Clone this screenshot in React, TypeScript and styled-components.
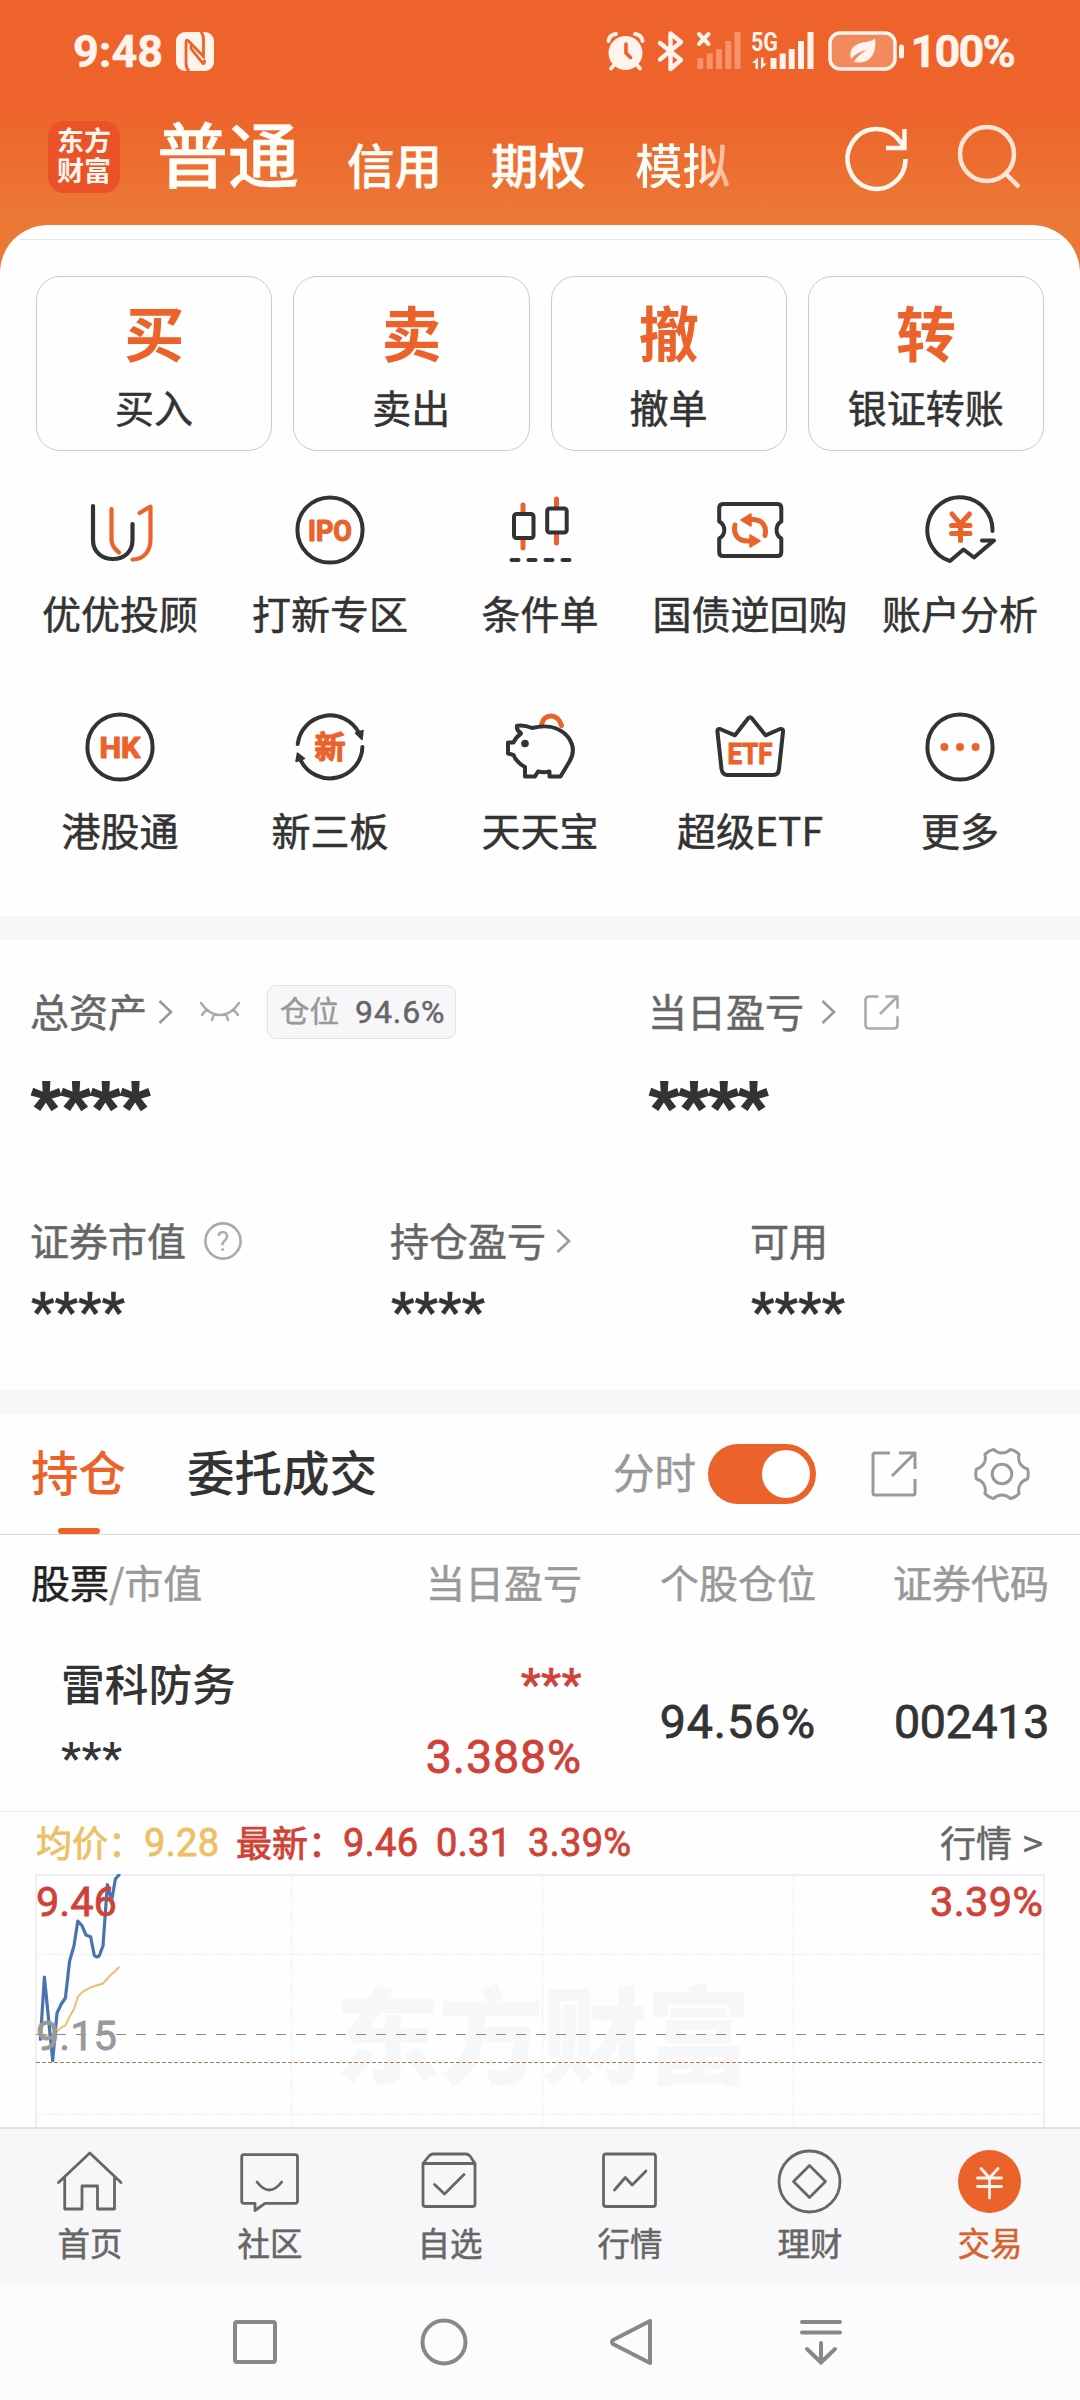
import React from "react";
import styled, { createGlobalStyle } from "styled-components";

const CJK = `"Noto Sans CJK SC", sans-serif`;
const NUM = `Roboto, "Noto Sans CJK SC", sans-serif`;
const ORANGE = "#eb632b";
const INK = "#333333";
const RED = "#cf4237";

const Global = createGlobalStyle`
  * { box-sizing: border-box; }
  body { margin: 0; background: #fefefe; }
`;

const Screen = styled.div`
  width: 1080px;
  height: 2400px;
  overflow: hidden;
  display: flex;
  flex-direction: column;
  background: #fefefe;
  font-family: ${CJK};
  color: ${INK};
  line-height: 1;
  white-space: nowrap;
  -webkit-text-stroke: 0.5px currentColor;
  svg { display: block; flex: none; overflow: visible; }
`;

/* ---------- top ---------- */

const Top = styled.header`
  height: 290px;
  flex: none;
  background: linear-gradient(#ee632b 0, #ed632b 108px, #ec7836 215px);
`;

const StatusBar = styled.div`
  height: 102px;
  padding: 0 66px 0 73px;
  display: flex;
  align-items: center;
  color: #fff3ec;
`;

const StatusText = styled.span<{ $ml?: number; $ls?: number }>`
  font: 700 45px/1 ${NUM};
  margin-left: ${(p) => p.$ml ?? 0}px;
  letter-spacing: ${(p) => p.$ls ?? 0}px;
`;

const StatusRight = styled.div`
  margin-left: auto;
  display: flex;
  align-items: center;
`;

const TitleBar = styled.div`
  height: 123px;
  padding: 0 58px 0 48px;
  display: flex;
  align-items: flex-start;
`;

const Logo = styled.div`
  width: 72px;
  height: 72px;
  margin-top: 19px;
  padding: 4px 9px 0;
  border-radius: 16px;
  background: #ec5228;
  color: #fff6ee;
  font-size: 27px;
  font-weight: 700;
  line-height: 30px;
  white-space: normal;
  word-break: break-all;
  -webkit-text-stroke: 0;
`;

const Markets = styled.nav`
  margin-left: 37px;
  padding-top: 14px;
  width: 600px;
  display: flex;
  align-items: baseline;
  color: #fffdf8;
  font-weight: 500;
`;

const Market = styled.span<{ $active?: boolean; $fade?: boolean }>`
  font-size: ${(p) => (p.$active ? 71 : 47.5)}px;
  margin-right: ${(p) => (p.$active ? 48 : 49)}px;
  position: relative;
  top: ${(p) => (p.$active ? 0 : 2)}px;
  ${(p) => p.$fade && `
    color: transparent;
    -webkit-text-stroke: 0;
    background: linear-gradient(90deg, #fffdf8 62%, rgba(255, 240, 225, 0.5) 100%);
    background-clip: text;
    -webkit-background-clip: text;
  `}
`;

const TitleActions = styled.div`
  margin-left: auto;
  margin-top: 16px;
  display: flex;
  gap: 47px;
`;

/* ---------- trading panel ---------- */

const Panel = styled.main`
  margin-top: -65px;
  height: 691px;
  flex: none;
  padding-top: 14px;
  border-radius: 48px 48px 0 0;
  background: #fefefe;
`;

const PanelLine = styled.div`
  height: 1px;
  margin: 0 20px;
  background: #e6e6e6;
`;

const Actions = styled.div`
  display: grid;
  grid-template-columns: repeat(4, 1fr);
  gap: 21px;
  padding: 36px 36px 0;
`;

const ActionCard = styled.button`
  height: 175px;
  padding: 25px 0 0;
  border: 1px solid #cbcbcb;
  border-radius: 24px;
  background: none;
  display: flex;
  flex-direction: column;
  align-items: center;
  gap: 27.5px;
  color: ${INK};
  font: 400 39px/1 ${CJK};
  -webkit-text-stroke: 0.5px currentColor;
`;

const ActionGlyph = styled.span`
  font-size: 60px;
  font-weight: 700;
  line-height: 57px;
  color: ${ORANGE};
  -webkit-text-stroke: 0;
`;

const Services = styled.div`
  display: grid;
  grid-template-columns: repeat(5, 210px);
  justify-content: center;
  row-gap: 79px;
  padding-top: 43px;
`;

const Service = styled.div`
  display: flex;
  flex-direction: column;
  align-items: center;
  gap: 27px;
  font-size: 39px;
`;

const Band = styled.div`
  height: 24px;
  flex: none;
  background: #f7f7fa;
`;

/* ---------- assets ---------- */

const Assets = styled.section`
  height: 450px;
  flex: none;
  padding: 45px 0 0 30px;
  color: #666;
`;

const AssetGrid = styled.div<{ $cols: string; $mt?: number }>`
  display: grid;
  grid-template-columns: ${(p) => p.$cols};
  margin-top: ${(p) => p.$mt ?? 0}px;
`;

const AssetLabel = styled.div`
  height: 54px;
  display: flex;
  align-items: center;
  font-size: 39px;
`;

const LabelText = styled.span`
  position: relative;
  top: -2px;
`;

const Gap = styled.i<{ $w: number }>`
  width: ${(p) => p.$w}px;
  flex: none;
`;

const Badge = styled.span`
  width: 189px;
  height: 54px;
  margin-left: 27px;
  padding-left: 12px;
  border: 1px solid #e2e2e4;
  border-radius: 9px;
  background: #f7f7fa;
  display: flex;
  align-items: center;
  gap: 16px;
  font-size: 29.5px;
  color: #999;
`;

const BadgeValue = styled.span`
  font: 400 32px/1 ${NUM};
  letter-spacing: 0.9px;
  color: #666;
`;

const Stars = styled.div<{ $size: number; $bold?: boolean; $mt: number }>`
  font: ${(p) => (p.$bold ? 700 : 500)} ${(p) => p.$size}px/1 ${NUM};
  height: 30px;
  margin-top: ${(p) => p.$mt}px;
  padding-left: 1px;
  color: ${INK};
  -webkit-text-stroke: ${(p) => (p.$bold ? 2 : 0.4)}px currentColor;
`;

/* ---------- positions ---------- */

const TabsRow = styled.div`
  height: 121px;
  flex: none;
  padding: 0 51px 0 31px;
  display: flex;
  align-items: center;
  border-bottom: 1px solid #dcdcdc;
`;

const Tab = styled.div<{ $active?: boolean }>`
  height: 120px;
  margin-right: 61px;
  padding-top: 33px;
  display: flex;
  flex-direction: column;
  align-items: center;
  justify-content: space-between;
  font-size: 47.5px;
  font-weight: 500;
  color: ${(p) => (p.$active ? ORANGE : INK)};
  -webkit-text-stroke: 0;
`;

const Underline = styled.i`
  width: 42px;
  height: 6px;
  border-radius: 3px;
  background: ${ORANGE};
`;

const TabTools = styled.div`
  margin-left: auto;
  display: flex;
  align-items: center;
  font-size: 41.5px;
  color: #999;
`;

const Toggle = styled.span`
  width: 108px;
  height: 60px;
  margin: 0 55px 0 12px;
  padding: 6px;
  border-radius: 30px;
  background: ${ORANGE};
  display: flex;
  justify-content: flex-end;
`;

const Knob = styled.i`
  width: 48px;
  height: 48px;
  border-radius: 50%;
  background: #fff;
`;

const Columns = styled.div<{ $h: number }>`
  height: ${(p) => p.$h}px;
  flex: none;
  padding: 0 31px;
  display: grid;
  grid-template-columns: 317px 234px 234px 233px;
  align-items: center;
  justify-items: end;
`;

const HeadCell = styled.span<{ $left?: boolean }>`
  justify-self: ${(p) => (p.$left ? "start" : "end")};
  position: relative;
  top: -3px;
  font-size: 39px;
  color: #999;
  b { font-weight: 400; color: #222; }
`;

const StockName = styled.div`
  justify-self: start;
  align-self: start;
  padding: 27px 0 0 30px;
  font-size: 43.7px;
  font-weight: 500;
  -webkit-text-stroke: 0;
`;

const Profit = styled.div`
  align-self: start;
  padding-top: 28px;
  display: flex;
  flex-direction: column;
  align-items: flex-end;
  color: ${RED};
`;

const Value = styled.span<{ $red?: boolean; $mt?: number; $ls?: number }>`
  font: 400 46.5px/1 ${NUM};
  margin-top: ${(p) => p.$mt ?? 0}px;
  letter-spacing: ${(p) => p.$ls ?? 0}px;
  color: ${(p) => (p.$red ? RED : INK)};
  -webkit-text-stroke: 0.8px currentColor;
`;

const SmallStars = styled.div<{ $red?: boolean; $mt?: number }>`
  font: 500 45px/1 ${NUM};
  height: 30px;
  margin-top: ${(p) => p.$mt ?? 0}px;
  letter-spacing: 0.5px;
  color: ${(p) => (p.$red ? RED : INK)};
`;

const Quote = styled.div`
  height: 63px;
  flex: none;
  padding: 0 37px 0 36px;
  border-top: 1px solid #ececec;
  display: flex;
  align-items: center;
  font-size: 36px;
`;

const QuoteText = styled.span<{ $c: string; $w: number; $num?: boolean }>`
  width: ${(p) => p.$w}px;
  flex: none;
  color: ${(p) => p.$c};
  font-family: ${(p) => (p.$num ? NUM : CJK)};
  font-size: ${(p) => (p.$num ? 38 : 36)}px;
  letter-spacing: ${(p) => (p.$num ? 0.3 : 0)}px;
  position: relative;
  top: ${(p) => (p.$num ? 0 : -2)}px;
  -webkit-text-stroke: 0.8px currentColor;
`;

const QuoteLink = styled.span`
  margin-left: auto;
  position: relative;
  top: -2px;
  word-spacing: 3px;
  color: #666;
`;

const ChartWrap = styled.div`
  height: 253px;
  flex: none;
  overflow: hidden;
`;

/* ---------- bottom ---------- */

const TabBar = styled.nav`
  height: 157px;
  flex: none;
  padding-top: 16px;
  border-top: 2px solid #e3e3e6;
  background: #f7f7fa;
  display: grid;
  grid-template-columns: repeat(6, 180px);
`;

const TabItem = styled.div<{ $active?: boolean }>`
  display: flex;
  flex-direction: column;
  align-items: center;
  gap: 9px;
  font-size: 32.5px;
  color: ${(p) => (p.$active ? "#d8622f" : "#666")};
`;

const NavBar = styled.div`
  height: 116px;
  flex: none;
  padding: 0 162px 0 161px;
  background: #fcfcfc;
  display: grid;
  grid-template-columns: repeat(4, 188.5px);
  justify-items: center;
  align-items: center;
`;

/* ---------- icons ---------- */

const Chevron = () => (
  <svg width="15" height="24" viewBox="0 0 15 24" fill="none" stroke="#999" strokeWidth="2.6">
    <path d="M1.5 1 13 12 1.5 23" />
  </svg>
);

const Box = ({ children, stroke = INK, w = 4 }: { children: React.ReactNode; stroke?: string; w?: number }) => (
  <svg width="72" height="72" viewBox="0 0 72 72" fill="none" stroke={stroke} strokeWidth={w} strokeLinecap="round" strokeLinejoin="round">
    {children}
  </svg>
);

const Word = ({ t, w, y = 46.5, size = 29.5 }: { t: string; w: number; y?: number; size?: number }) => (
  <text x="36" y={y} textAnchor="middle" textLength={w} lengthAdjust="spacingAndGlyphs" fontFamily={NUM} fontWeight="700" fontSize={size} fill={ORANGE} stroke={ORANGE} strokeWidth="1.2">
    {t}
  </text>
);

const services = [
  {
    name: "优优投顾",
    icon: (
      <Box w={4.2}>
        <path d="M9 12V46C9 58 18 65 29 65S48.500 58 48.500 46V30" />
        <path stroke={ORANGE} d="M27.500 15V46Q28 53 35 58.500M48.500 65.500C60 65.500 66.500 57 66.500 45V12.500L55.500 19" />
      </Box>
    ),
  },
  { name: "打新专区", icon: <Box><circle cx="36" cy="36" r="32.600" /><Word t="IPO" w={44} /></Box> },
  {
    name: "条件单",
    icon: (
      <Box>
        <path stroke={ORANGE} strokeWidth="5" d="M19 11V54M52.500 5V49" />
        <rect x="10" y="20" width="19.500" height="24" rx="2.500" fill="#fefefe" />
        <rect x="43.200" y="14.500" width="19.500" height="24" rx="2.500" fill="#fefefe" />
        <path d="M7.500 66H14.500M24.500 66H31.500M41.500 66H48.500M58.500 66H65.500" />
      </Box>
    ),
  },
  {
    name: "国债逆回购",
    icon: (
      <Box>
        <path d="M9 10H63.500Q67.300 10 67.300 14V27.500C61 31 61 41 67.300 44.500V58Q67.300 62 63.500 62H9Q5.200 62 5.200 58V44.500C12 41 12 31 5.200 27.500V14Q5.200 10 9 10Z" />
        <g stroke={ORANGE} strokeWidth="5">
          <path d="M34 25.500H38C49 25.500 53 33 51 41.500M38 47H34C23 47 19 39.500 21 31" />
          <path fill={ORANGE} strokeWidth="1.500" d="M27 26 37 20V32ZM46 47 36 41V53Z" />
        </g>
      </Box>
    ),
  },
  {
    name: "账户分析",
    icon: (
      <Box>
        <path d="M68.500 37A32.600 32.600 0 1 0 26 67L39.500 55.500 50 63.500 70 46.500H58" />
        <path stroke={ORANGE} strokeWidth="5" d="M28 20 36.500 30 45.500 20M36.500 30V46.500M27.500 31.500H46M27.500 39.500H46" />
      </Box>
    ),
  },
  { name: "港股通", icon: <Box><circle cx="36" cy="36" r="32.600" /><Word t="HK" w={41} /></Box> },
  {
    name: "新三板",
    icon: (
      <Box>
        <path d="M3.700 33A32.600 32.600 0 0 1 65 22M68.400 36A32.600 32.600 0 0 1 7 50" />
        <path fill={INK} strokeWidth="1.500" d="M61.500 22 69 19.500 68 28.500ZM3.500 42 2 50.500 10.500 47.500Z" />
        <Word t="新" w={31} size={31} y={47} />
      </Box>
    ),
  },
  {
    name: "天天宝",
    icon: (
      <Box>
        <path stroke={ORANGE} strokeWidth="5" d="M37.500 13.500C40 2 54 2 57.500 14.500" />
        <path d="M4 31.500H9.500Q12 26 17 22.500 12 19 13 14.700 20 13.500 28 17C48 12 59 20 64 26 70 34 70 43 65.500 50.500L56.500 65.500H45.500V60.500Q40 62 34 60.500L31 65.500H21V56Q12 51 9.500 44L4 42.500Z" />
        <circle cx="21" cy="32.500" r="3.800" fill={INK} stroke="none" />
      </Box>
    ),
  },
  {
    name: "超级ETF",
    icon: (
      <Box>
        <path d="M3.500 21Q3 17.500 6 18L21 24.300 34 7.500Q36 5 38 7.500L51.500 24.300 66 18Q69.500 17.500 69 21L65 58Q64.500 64 59 64H13.500Q8.500 64 7.500 58Z" />
        <Word t="ETF" w={45} y={53} />
      </Box>
    ),
  },
  {
    name: "更多",
    icon: (
      <Box>
        <circle cx="36" cy="36" r="32.600" />
        <g fill={ORANGE} stroke="none">
          <circle cx="20.400" cy="36" r="4" /><circle cx="36" cy="36" r="4" /><circle cx="51.600" cy="36" r="4" />
        </g>
      </Box>
    ),
  },
];

const tabs = [
  { name: "首页", icon: <Box stroke="#666" w={2.8}><path d="M4.500 37.500 35.800 8 67 37.500M10.700 33V64H28V41H43.500V64H60.500V33" /></Box> },
  {
    name: "社区",
    icon: (
      <Box stroke="#666" w={2.8}>
        <path d="M10 9.700H61Q63.500 9.700 63.500 12V56Q63.500 58.300 61 58.300H31L21 65.500V58.300H10Q7.700 58.300 7.700 56V12Q7.700 9.700 10 9.700Z" />
        <path d="M23 37Q35.300 53 47.700 37" />
      </Box>
    ),
  },
  {
    name: "自选",
    icon: (
      <Box stroke="#666" w={2.8}>
        <path d="M9 18.500 15 11Q17 9 19 9H52Q54 9 56 11L61 18.500V59Q61 61.500 58.500 61.500H11.500Q9 61.500 9 59ZM9 18.500H61M20.500 39.500 30.500 49 50 29.500" />
      </Box>
    ),
  },
  {
    name: "行情",
    icon: (
      <Box stroke="#666" w={2.8}>
        <rect x="9.500" y="9" width="52" height="52.500" rx="2.500" />
        <path d="M20.500 45 31.300 32.500 38.200 40 52 26" />
      </Box>
    ),
  },
  { name: "理财", icon: <Box stroke="#666" w={2.8}><circle cx="35.500" cy="36.500" r="30.500" /><path d="M35.500 20.500 51.500 36.500 35.500 52.500 19.500 36.500Z" /></Box> },
  {
    name: "交易",
    icon: (
      <Box stroke="#fff6ee" w={2.8}>
        <circle cx="35.500" cy="36.500" r="31.500" fill={ORANGE} stroke="none" />
        <path d="M27 23.500 35.500 33 44 23.500M35.500 33V53M23.500 33H47.500M23.500 41.500H47.500" />
      </Box>
    ),
  },
];

// Six rounded lobes joined by concave arcs around a 54px circle.
const polar = (deg: number, r: number) => {
  const a = (deg * Math.PI) / 180;
  return `${(27 + r * Math.cos(a)).toFixed(1)} ${(27 + r * Math.sin(a)).toFixed(1)}`;
};
const gearPath =
  [0, 60, 120, 180, 240, 300]
    .map((d, i) => `${i ? "L" : "M"}${polar(d - 11, 26)}Q${polar(d, 27)} ${polar(d + 11, 26)}C${polar(d + 20, 20)} ${polar(d + 40, 20)} ${polar(d + 49, 26)}`)
    .join("") + "Z";

const ShareIcon = ({ s, c, w, r = 2 }: { s: number; c: string; w: number; r?: number }) => (
  <svg width={s} height={s} viewBox="0 0 46 46" fill="none" stroke={c} strokeWidth={w} strokeLinejoin="round">
    <path d={`M19 2H${2 + r}Q2 2 2 ${2 + r}V${44 - r}Q2 44 ${2 + r} 44H${44 - r}Q44 44 44 ${44 - r}V28M28 2H44V18M44 2 21 25`} />
  </svg>
);

const price = "40.3,166.7 44.4,103 52.7,186.7 57,139 61.3,130 65.4,124 69.6,87 74,71.7 77.8,47 82,51.7 86,61 90.6,62.7 94.4,81.7 96.8,83 99.2,82 103,71.7 107.4,10.7 111.6,26.7 115.4,5 119.8,0";
const average = "40.3,163 52.7,159.5 57,157.5 61.3,153.5 65.4,151.5 69.6,142.7 74,135 78,122.5 82.5,118 90,113.7 96.4,111.5 103,109.5 107,105 111.6,100 115.4,97 119.5,92.7";

const Chart = () => (
  <svg width="1080" height="253" viewBox="0 0 1080 253" fill="none">
    <text x="543" y="201" textAnchor="middle" fontFamily={CJK} fontWeight="900" fontSize="105" textLength="416" fill="#f7f7f7">东方财富</text>
    <path d="M36 253V1H1044V253" stroke="#efefef" strokeWidth="2" />
    <path d="M291.500 2V253M542.500 2V253M793.500 2V253M36 80.500H1044M36 240.500H1044" stroke="#ebebeb" strokeWidth="1.500" strokeDasharray="1.500 1.500" />
    <polyline points={average} stroke="#e8c26e" strokeWidth="2" />
    <polyline points={price} stroke="#4a74b0" strokeWidth="3.2" strokeLinejoin="round" />
    <path d="M36 160.500H1044" stroke="#8a8a8a" strokeWidth="1.200" strokeDasharray="10 10" />
    <path d="M36 188.500H1044" stroke="#b8794f" strokeWidth="1.200" strokeDasharray="4 2" />
    <g fontFamily={NUM} fontSize="41.500" strokeWidth="0.800">
      <text x="36" y="41.500" fill={RED} stroke={RED}>9.46</text>
      <text x="1043" y="41.500" textAnchor="end" textLength="113" fill={RED} stroke={RED}>3.39%</text>
      <text x="36" y="176" fill="#999" stroke="#999">9.15</text>
    </g>
  </svg>
);

const StatusIcons = () => (
  <svg width="298" height="40" viewBox="608 31 298 40" fill="none" stroke="#fff3ec">
    <circle cx="626.500" cy="53" r="17" fill="#fff3ec" stroke="none" />
    <path strokeWidth="3.800" strokeLinecap="round" d="M609.500 41Q610 35 617 34M643.500 41Q643 35 636 34M616 64 612 68.500M637 64 641 68.500" />
    <path stroke={ORANGE} strokeWidth="3.600" strokeLinecap="round" d="M627 44V53L631.500 57.500" />
    <path strokeWidth="4.400" strokeLinejoin="round" strokeLinecap="round" d="M661 43 682 60 671.500 69V33.500L682 42 661 59.500" />
    <path strokeWidth="4" strokeLinecap="round" d="M700 34 709.500 44M709.500 34 700 44" />
    <g stroke="#f7936a" strokeWidth="6" strokeLinecap="butt">
      <path d="M701.300 69V58M710.700 69V53.500M720 69V49M729.300 69V41M738.500 69V32" />
    </g>
    <g strokeWidth="6"><path d="M774.500 69V58M783.700 69V53.500M792.700 69V49M802 69V41M811.500 69V32" /></g>
    <text x="752" y="50.500" fill="#fff3ec" stroke="none" fontFamily={NUM} fontWeight="700" fontSize="25" textLength="27" lengthAdjust="spacingAndGlyphs">5G</text>
    <path fill="#fff3ec" stroke="none" d="M753 63 759 57.500V69H756.500V63ZM762 57.500V69L768 63.500H764.500V57.500Z" />
    <rect x="831" y="33" width="65" height="36" rx="10" fill="#f28a5d" strokeWidth="3.500" />
    <path d="M902.500 47V56" strokeWidth="5" strokeLinecap="round" />
    <path fill="#fff3ec" stroke="none" d="M876 38.500C878 52 872 62 861 62.500Q857 62.700 855 61.500 860 54 868 50 858 52 852 59 849 48 860 43.500C867 41.500 872 42 876 38.500Z" />
  </svg>
);

const Nfc = () => (
  <svg width="38" height="39" viewBox="0 0 38 39">
    <rect width="38" height="39" rx="9" fill="#fff3ec" />
    <g fill="none" stroke={ORANGE} strokeWidth="2.800">
      <path d="M25 -.5Q27.500 3 27.500 7V24.500L12 8.500Q10 7 10 11V31Q10 36 13 39.500" />
      <path d="M15 13V16.500L27 31.500Q28.500 32 28.500 28" />
    </g>
  </svg>
);

export default function App() {
  return (
    <Screen>
      <Global />
      <Top>
        <StatusBar>
          <StatusText>9:48</StatusText>
          <Gap $w={13} />
          <Nfc />
          <StatusRight>
            <StatusIcons />
            <StatusText $ml={5} $ls={-1.8}>100%</StatusText>
          </StatusRight>
        </StatusBar>
        <TitleBar>
          <Logo>东方财富</Logo>
          <Markets>
            <Market $active>普通</Market>
            <Market>信用</Market>
            <Market>期权</Market>
            <Market $fade>模拟</Market>
          </Markets>
          <TitleActions>
            <svg width="66" height="70" viewBox="0 0 66 70" fill="none" stroke="#fff8ee" strokeWidth="4.500">
              <path d="M60.500 41A29 30 0 1 1 54 22M59.500 11V30H41M59.500 29 53 21" />
            </svg>
            <svg width="64" height="70" viewBox="0 0 64 70" fill="none" stroke="#ffe6d4" strokeWidth="4.500">
              <circle cx="29" cy="36" r="27" /><path d="M47 55 61 69" />
            </svg>
          </TitleActions>
        </TitleBar>
      </Top>

      <Panel>
        <PanelLine />
        <Actions>
          {[["买", "买入"], ["卖", "卖出"], ["撤", "撤单"], ["转", "银证转账"]].map(([g, t]) => (
            <ActionCard key={t}><ActionGlyph>{g}</ActionGlyph><span>{t}</span></ActionCard>
          ))}
        </Actions>
        <Services>
          {services.map((s) => <Service key={s.name}>{s.icon}<span>{s.name}</span></Service>)}
        </Services>
      </Panel>
      <Band />

      <Assets>
        <AssetGrid $cols="618px 1fr">
          <div>
            <AssetLabel>
              <LabelText>总资产</LabelText><Gap $w={11} /><Chevron />
              <Gap $w={27} />
              <svg width="40" height="20" viewBox="0 0 40 20" fill="none" stroke="#aaa" strokeWidth="2.400" strokeLinecap="round">
                <path d="M1 1Q9 13 20 13T39 1M6 8 2 13M14 12 12 18M26 12 28 18M34 8 38 13" />
              </svg>
              <Badge><LabelText>仓位</LabelText><BadgeValue>94.6%</BadgeValue></Badge>
            </AssetLabel>
            <Stars $bold $size={65.5} $mt={34}>****</Stars>
          </div>
          <div>
            <AssetLabel>
              <LabelText>当日盈亏</LabelText><Gap $w={17} /><Chevron />
              <Gap $w={28} /><ShareIcon s={35} c="#aaa" w={3.4} r={5} />
            </AssetLabel>
            <Stars $bold $size={65.5} $mt={34}>****</Stars>
          </div>
        </AssetGrid>
        <AssetGrid $cols="360px 360px 1fr" $mt={111}>
          <div>
            <AssetLabel>
              <LabelText>证券市值</LabelText><Gap $w={18} />
              <svg width="38" height="38" viewBox="0 0 38 38" fill="none">
                <circle cx="19" cy="19" r="17.600" stroke="#aaa" strokeWidth="2.600" />
                <text x="19" y="28.500" textAnchor="middle" fontFamily={NUM} fontSize="27" fill="#aaa">?</text>
              </svg>
            </AssetLabel>
            <Stars $size={53} $mt={18}>****</Stars>
          </div>
          <div>
            <AssetLabel><LabelText>持仓盈亏</LabelText><Gap $w={10} /><Chevron /></AssetLabel>
            <Stars $size={53} $mt={18}>****</Stars>
          </div>
          <div>
            <AssetLabel><LabelText>可用</LabelText></AssetLabel>
            <Stars $size={53} $mt={18}>****</Stars>
          </div>
        </AssetGrid>
      </Assets>
      <Band />

      <TabsRow>
        <Tab $active>持仓<Underline /></Tab>
        <Tab>委托成交</Tab>
        <TabTools>
          <LabelText>分时</LabelText>
          <Toggle><Knob /></Toggle>
          <ShareIcon s={46} c="#999" w={3} />
          <Gap $w={58} />
          <svg width="54" height="54" viewBox="0 0 54 54" fill="none" stroke="#999" strokeWidth="3" strokeLinejoin="round">
            <path d={gearPath} /><circle cx="27" cy="27" r="9.800" />
          </svg>
        </TabTools>
      </TabsRow>
      <Columns $h={99}>
        <HeadCell $left><b>股票</b>/市值</HeadCell>
        <HeadCell>当日盈亏</HeadCell>
        <HeadCell>个股仓位</HeadCell>
        <HeadCell>证券代码</HeadCell>
      </Columns>
      <Columns $h={177}>
        <StockName>雷科防务<SmallStars $mt={31}>***</SmallStars></StockName>
        <Profit><SmallStars $red>***</SmallStars><Value $red $mt={42} $ls={0.9}>3.388%</Value></Profit>
        <Value $ls={0.9}>94.56%</Value>
        <Value $ls={-0.3}>002413</Value>
      </Columns>
      <Quote>
        <QuoteText $c="#ecc065" $w={108}>均价：</QuoteText>
        <QuoteText $c="#ecc065" $w={92} $num>9.28</QuoteText>
        <QuoteText $c={RED} $w={107}>最新：</QuoteText>
        <QuoteText $c={RED} $w={93} $num>9.46</QuoteText>
        <QuoteText $c={RED} $w={92} $num>0.31</QuoteText>
        <QuoteText $c={RED} $w={110} $num>3.39%</QuoteText>
        <QuoteLink>行情 &gt;</QuoteLink>
      </Quote>
      <ChartWrap><Chart /></ChartWrap>

      <TabBar>
        {tabs.map((t) => (
          <TabItem key={t.name} $active={t.name === "交易"}>{t.icon}<span>{t.name}</span></TabItem>
        ))}
      </TabBar>
      <NavBar>
        <svg width="48" height="48" viewBox="0 0 48 48" fill="none" stroke="#888" strokeWidth="4"><rect x="4" y="4" width="40" height="40" rx="2" /></svg>
        <svg width="48" height="48" viewBox="0 0 48 48" fill="none" stroke="#888" strokeWidth="4"><circle cx="24" cy="24" r="21.500" /></svg>
        <svg width="48" height="48" viewBox="0 0 48 48" fill="none" stroke="#888" strokeWidth="4" strokeLinejoin="round"><path d="M42 3V45L5 26Q3 24 5 22Z" /></svg>
        <svg width="48" height="48" viewBox="0 0 48 48" fill="none" stroke="#888" strokeWidth="4" strokeLinecap="round"><path d="M5 4H43M5 14.500H43M24 25V44M10 31 24 44.500 38 31" /></svg>
      </NavBar>
    </Screen>
  );
}
